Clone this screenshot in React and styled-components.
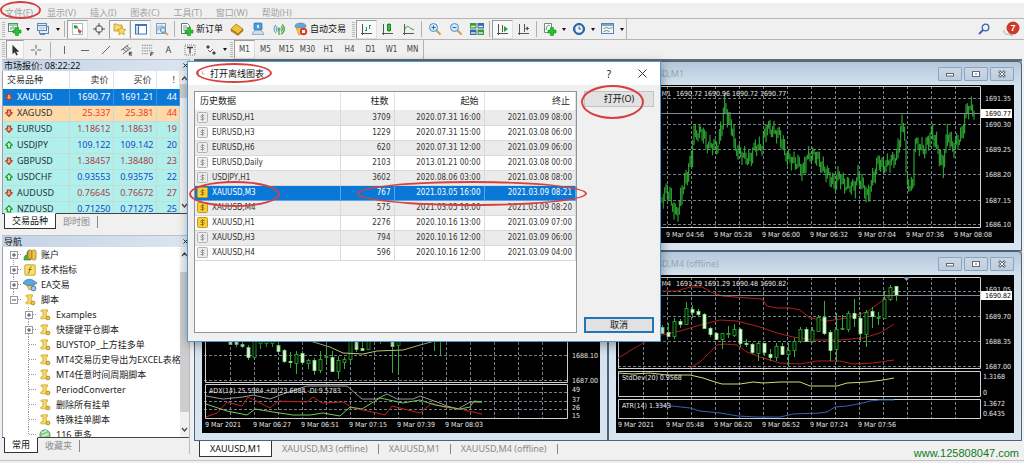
import React from "react";
import styled, { createGlobalStyle, css } from "styled-components";

const UI = `"Noto Sans", "Noto Sans CJK SC", sans-serif`;
const SMALL = `"DejaVu Sans Condensed", "Noto Sans", "Noto Sans CJK SC", sans-serif`;

const GlobalStyle = createGlobalStyle`
  * { box-sizing: border-box; }
  body { margin: 0; background: #f0f0f0; font: 9px/12px ${UI}; color: #222; overflow-x: hidden; }
  button { font: inherit; color: inherit; border: 0; padding: 0; margin: 0; background: none; cursor: default; }
  table { border-collapse: collapse; border-spacing: 0; }
  svg { display: block; flex: none; }
`;

const Page = styled.div`
  position: relative;
  display: flex;
  flex-direction: column;
  min-height: 100vh;
`;
const MenuBar = styled.nav`
  display: flex;
  gap: 14px;
  height: 18px;
  padding: 3px 5px 0;
  border-top: 3px solid #fff;
  color: #a2a2a2;
  line-height: 9px;
`;
const MenuItem = styled.button`
  white-space: nowrap;
  position: relative;
`;
const Bar = styled.div`
  display: flex;
  height: ${(p) => p.$h}px;
  border-top: 1px solid #b4b4b4;
`;
const Tools = styled.div`
  display: flex;
  align-items: center;
  padding-left: 1px;
  border-right: 1px solid #b4b4b4;
`;
const Spring = styled.div`
  flex: 1;
`;
const Tool = styled.button`
  display: flex;
  align-items: center;
  justify-content: center;
  gap: 2px;
  width: ${(p) => p.$w || 21}px;
  height: 19px;
  white-space: nowrap;
  color: ${(p) => (p.$text ? "#111" : "#444")};
  font-family: ${(p) => (p.$period ? SMALL : UI)};
  font-size: ${(p) => (p.$period ? 8 : 9)}px;
  ${(p) =>
    p.$on &&
    css`
      background: #f8f8f8;
      border: 1px solid #dedede;
      border-top-color: #9c9c9c;
      border-left-color: #9c9c9c;
    `}
`;
const Drop = styled.button`
  width: 8px;
  height: 18px;
  display: flex;
  align-items: center;
  justify-content: center;
  &::after {
    content: "";
    border: 2px solid transparent;
    border-top: 3px solid #111;
    border-bottom: 0;
  }
`;
const Sep = styled.span`
  width: 1px;
  height: 16px;
  margin: 0 2px;
  background: #b0b0b0;
`;
const Grip = styled.span`
  width: 3px;
  height: 15px;
  margin: 0 1px;
  background: repeating-linear-gradient(#b9b9b9 0 1px, #f0f0f0 1px 2px);
`;
const Alerts = styled.div`
  display: flex;
  align-items: center;
  gap: 12px;
  padding-right: 4px;
`;

const Workspace = styled.main`
  display: flex;
`;
const Side = styled.aside`
  width: 190px;
  margin-right: 4px;
  padding-left: 2px;
  flex: none;
`;
const Desk = styled.div`
  flex: 1;
  min-width: 0;
`;
const Panel = styled.section`
  margin-bottom: 5px;
  border-right: 1px solid #b5bcc4;
`;
const PanelTitle = styled.header`
  display: flex;
  justify-content: space-between;
  height: 12px;
  padding: 0 1px 0 2px;
  line-height: 11px;
  color: #111;
  background: linear-gradient(90deg, #c3d3e6, #dce5ef);
  border-top: 1px solid #b9c2cc;
`;
const PanelHeading = styled.h2`
  margin: 0;
  font: inherit;
`;
const PanelBody = styled.div`
  display: flex;
  height: ${(p) => p.$h}px;
  overflow: hidden;
  background: #fff;
  border-left: 1px solid #9aa2aa;
`;
const ScrollBar = styled.div`
  width: 9px;
  flex: none;
  display: flex;
  flex-direction: column;
  align-items: center;
  justify-content: space-between;
  background: #f0f0f0;
  padding: 4px 0;
`;
const Thumb = styled.span`
  width: 9px;
  height: ${(p) => p.$h}px;
  margin-bottom: auto;
  margin-top: ${(p) => p.$top}px;
  background: #cdcdcd;
`;
const PanelTabs = styled.div`
  display: flex;
  height: 17px;
  padding-left: 2px;
  border-top: 1px solid #444;
`;
const PanelTab = styled.button`
  height: 16px;
  padding: 0 7px;
  margin-top: -1px;
  color: ${(p) => (p.$on ? "#111" : "#8a8a8a")};
  line-height: 14px;
  ${(p) =>
    p.$on
      ? css`
          background: #fff;
          border: 1px solid #333;
          border-top-color: #fff;
        `
      : css`
          margin-top: 2px;
          height: 12px;
          line-height: 10px;
          border-right: 1px solid #8a8a8a;
        `}
`;

const QuoteTable = styled.table`
  flex: 1;
  width: 176px;
  table-layout: fixed;
  th {
    height: 18px;
    padding: 0 4px;
    font-weight: 400;
    text-align: right;
    border-right: 1px solid #e2e2e2;
    color: #333;
  }
  th:first-child {
    text-align: left;
  }
`;
const rowColors = { sel: "#0a78d7", hot: "#ffd9a8", up: "#b0f0ec", down: "#b0f0ec" };
const textColors = { sel: "#fff", hot: "#e8402c", up: "#1747c8", down: "#b03a48" };
const QuoteRow = styled.tr`
  background: ${(p) => rowColors[p.$tone]};
  td {
    height: 16px;
    padding: 0 2px;
    text-align: right;
    line-height: 14px;
    color: ${(p) => textColors[p.$tone]};
    border: 1px solid ${(p) => (p.$tone === "sel" ? "#3b93e0" : "#c4dcd6")};
    border-width: 0 1px 1px 0;
  }
  td:first-child {
    text-align: left;
    color: ${(p) => (p.$tone === "sel" ? "#fff" : "#23333b")};
  }
`;
const Symbol = styled.span`
  display: flex;
  align-items: center;
  gap: 4px;
`;

const Tree = styled.ul`
  flex: 1;
  min-width: 0;
  margin: 0;
  padding: 0;
  overflow: hidden;
  list-style: none;
`;
const TreeRow = styled.li`
  display: flex;
  align-items: center;
  height: 15px;
  padding-left: ${(p) => (p.$level ? 22 : 7)}px;
  white-space: nowrap;
  gap: 4px;
`;
const Branch = styled.svg`
  overflow: visible;
`;
const TreeIcon = styled.span`
  display: flex;
  justify-content: center;
  width: 15px;
  flex: none;
`;
const TreeLabel = styled.button`
  white-space: nowrap;
`;

const Mdi = styled.div`
  margin-right: 2px;
  display: grid;
  grid-template-columns: 1fr 1fr;
  align-content: start;
  border-top: 2px solid #626a73;
  background: #a0a6ac;
`;
const Frame = styled.section`
  display: flex;
  flex-direction: column;
  border: 1px solid #4f6375;
  border-radius: 4px 4px 0 0;
  padding: 0 7px 7px;
  background: linear-gradient(#b4c8dc, #d3e0ed 23px, #d7e4f1);
`;
const FrameTitle = styled.header`
  display: flex;
  align-items: center;
  gap: 2px;
  height: 23px;
  padding-left: 3px;
  color: #98a4af;
`;
const FrameLabel = styled.span`
  flex: 1;
  padding-left: 1px;
  white-space: nowrap;
`;
const FrameButton = styled.button`
  display: flex;
  align-items: center;
  justify-content: center;
  width: 24px;
  height: 14px;
  border: 1px solid #8fa3b8;
  border-radius: 1px;
  background: linear-gradient(#c9d8e8, #bccee0);
`;
const Plot = styled.svg`
  width: 100%;
  height: auto;
  background: #000;
  font-family: ${SMALL};
  font-size: 7px;
  fill: #e6e6e6;
`;

const Footer = styled.footer`
  display: flex;
  height: 16px;
  padding-left: 5px;
  align-items: flex-start;
`;
const ChartTab = styled.button`
  height: 16px;
  padding: 0 10px;
  line-height: 15px;
  white-space: nowrap;
  ${(p) =>
    p.$on
      ? css`
          background: #fff;
          color: #111;
          border: 1px solid #333;
          border-top: 0;
        `
      : css`
          color: #8a8a8a;
          height: 10px;
          margin-top: 3px;
          line-height: 10px;
          border-right: 1px solid #8a8a8a;
        `}
`;
const StatusLine = styled.div`
  flex: 1;
  margin-top: 1px;
  border-top: 1px solid #c4c4c4;
`;
const SiteLink = styled.a`
  position: absolute;
  right: 5px;
  bottom: 3px;
  z-index: 3;
  font: 11px/13px "Liberation Sans", Arial, sans-serif;
  color: #0f7a1c;
  text-decoration: none;
`;

const Dialog = styled.div`
  position: absolute;
  left: 187px;
  top: 61px;
  width: 474px;
  z-index: 2;
  border: 1px solid #4a9ad4;
  background: #f0f0f0;
  box-shadow: 1px 3px 10px rgba(0, 0, 0, 0.35);
`;
const DialogTitle = styled.header`
  display: flex;
  align-items: center;
  height: 23px;
  padding: 0 12px 0 9px;
  background: #fff;
  color: #111;
`;
const DialogHeading = styled.h1`
  flex: 1;
  margin: 0 0 0 4px;
  font: inherit;
`;
const DialogIconButton = styled.button`
  width: 10px;
  margin-left: 24px;
  font-size: 10px;
`;
const DialogBody = styled.div`
  display: flex;
  gap: 7px;
  padding: 6px 6px 8px;
`;
const ListBox = styled.div`
  flex: 1;
  height: 242px;
  background: #fff;
  border: 1px solid #8c939a;
`;
const HistoryTable = styled.table`
  width: 100%;
  table-layout: fixed;
  font-family: ${SMALL};
  font-size: 8px;
  th {
    height: 18px;
    padding: 0 5px;
    font: 9px/12px ${UI};
    color: #222;
    text-align: right;
    border-right: 1px solid #e3e3e3;
  }
  th:first-child {
    text-align: left;
  }
`;
const HistoryRow = styled.tr`
  background: ${(p) => (p.$on ? "#0a78d7" : p.$alt ? "#ebebeb" : "#fff")};
  color: ${(p) => (p.$on ? "#fff" : "#333")};
  td {
    height: 15px;
    padding: 0 3px 0 2px;
    line-height: 13px;
    text-align: right;
    border: 1px solid ${(p) => (p.$on ? "#5aa6e6" : "#d9d9d9")};
    border-width: 0 1px 1px 0;
    white-space: nowrap;
  }
  td:first-child {
    text-align: left;
  }
`;
const DialogActions = styled.div`
  display: flex;
  flex-direction: column;
  justify-content: space-between;
  width: 70px;
`;
const ActionButton = styled.button`
  height: 16px;
  line-height: 12px;
  color: #111;
  background: #e1e1e1;
  border: ${(p) => (p.$focus ? "2px solid #1f77b8" : "1px solid #c4c4c4")};
`;
const Ring = styled.span`
  position: absolute;
  left: ${(p) => p.$x}px;
  top: ${(p) => p.$y}px;
  width: ${(p) => p.$w}px;
  height: ${(p) => p.$h}px;
  border: 2px solid #d8403f;
  border-radius: 50%;
  pointer-events: none;
`;

/* ---------- icons ---------- */

const Ico = ({ s = 14, children, vb = 14 }) => (
  <svg width={s} height={s} viewBox={`0 0 ${vb} ${vb}`} fill="none" aria-hidden="true">
    {children}
  </svg>
);
const plus = <path d="M7.500 5.500h3v2.500h2.500v3h-2.500v2.500h-3v-2.500h-2.500v-3h2.500z" fill="#27c32f" stroke="#0c8a17" strokeWidth=".6" />;

const icons = {
  newChart: (
    <Ico>
      <rect x=".5" y="1.500" width="9" height="8" fill="#fff" stroke="#5d8a76" />
      <path d="M1 3h8M3 8V5M5 7V4M7 8V5" stroke="#3c9a55" />
      {plus}
    </Ico>
  ),
  profiles: (
    <Ico>
      <rect x="3.500" y="4.500" width="9" height="7" fill="#e4effa" stroke="#5e89b5" />
      <rect x="1.500" y="1.500" width="9" height="7" fill="#dcebf8" stroke="#5e89b5" />
      <path d="M2 3.500h8M4 12.500h5" stroke="#5e89b5" />
      <path d="M3.500 6h5" stroke="#9ec0e0" />
    </Ico>
  ),
  market: (
    <Ico>
      <rect x="1.500" y="1.500" width="10" height="11" fill="#fff" stroke="#a5c2b3" />
      <path d="M3 3l4 1-2 3-2-1z" fill="#27a038" />
      <path d="M7 7l4 2-2 3-2-2z" fill="#d4502e" />
      <path d="M6 5l2 3" stroke="#777" />
    </Ico>
  ),
  target: (
    <Ico>
      <circle cx="7" cy="7" r="3.500" stroke="#555" />
      <path d="M7 1v4M7 9v4M1 7h4M9 7h4" stroke="#555" />
    </Ico>
  ),
  navigator: (
    <Ico>
      <path d="M1 2h3l1 1h4v6H1z" fill="#f3d978" stroke="#c49318" strokeWidth=".8" />
      <path d="M8.500 4.500l1.300 2.800 3 .4-2.200 2 .6 3-2.700-1.500-2.700 1.500.6-3-2.200-2 3-.4z" fill="#ffdf55" stroke="#c49318" strokeWidth=".8" />
    </Ico>
  ),
  terminal: (
    <Ico>
      <rect x="1.500" y="2.500" width="11" height="9.500" fill="#fff" stroke="#3f74b5" />
      <path d="M1.500 3h11" stroke="#3f74b5" strokeWidth="2" />
      <path d="M4.500 4v8" stroke="#3f74b5" />
      <path d="M2 6h2M2 8h2M2 10h2" stroke="#8db3de" />
    </Ico>
  ),
  tester: (
    <Ico>
      <rect x="1.500" y="1.500" width="9" height="10" fill="#e5f0fa" stroke="#7fa3c7" />
      <path d="M3 9V4M5 8V3M7 7V3M9 8V4" stroke="#6b8fb5" strokeWidth=".8" />
      <circle cx="8" cy="8" r="2.500" fill="#cfe6f7" stroke="#5d86b0" />
      <path d="M10 10l3 3" stroke="#c29a3d" strokeWidth="1.500" />
    </Ico>
  ),
  order: (
    <Ico>
      <path d="M1.500 1.500h6l2 2v8h-8z" fill="#fff" stroke="#5d7a70" />
      <path d="M3 4h4M3 6h4M3 8h2" stroke="#7c9a8c" />
      {plus}
    </Ico>
  ),
  book: (
    <Ico>
      <path d="M1 7l5-5 7 5-5 5z" fill="#f0c23c" stroke="#a8790f" strokeWidth=".8" />
      <path d="M1 7v2l7 4.500 5-4.500V7l-5 5z" fill="#c48c1b" stroke="#97690d" strokeWidth=".6" />
    </Ico>
  ),
  expert: (
    <Ico>
      <rect x="3" y="1" width="8" height="7" rx="1" fill="#4a9be0" stroke="#2a6aab" strokeWidth=".7" />
      <path d="M6 3v3h2v-3z" fill="#d8ecfb" />
      <path d="M2 10.500c0-3 10-3 10 0l1 2H1z" fill="#cfdde9" stroke="#7d97ad" strokeWidth=".7" />
    </Ico>
  ),
  signal: (
    <Ico>
      <path d="M4 3a5 5 0 0 0 0 8M5.500 4.500a3 3 0 0 0 0 5" stroke="#6a9cc0" strokeWidth="1.100" />
      <path d="M10 2.500a5.500 5.500 0 0 1-1 9.500M9 4.500a3 3 0 0 1 0 5" stroke="#45ad4b" strokeWidth="1.400" />
      <circle cx="7" cy="7" r="1.600" fill="#5cae4e" />
      <path d="M7 8v5" stroke="#45953f" strokeWidth="1.200" />
    </Ico>
  ),
  auto: (
    <Ico>
      <ellipse cx="6.500" cy="4" rx="5.500" ry="3" fill="#63a7d8" stroke="#3678ad" strokeWidth=".6" />
      <path d="M2 6h8l-1 5-4 2z" fill="#f1cd4b" stroke="#b78d1c" strokeWidth=".6" />
      <circle cx="9.500" cy="9.500" r="3.700" fill="#dc3a2b" />
      <rect x="8" y="8" width="3" height="3" fill="#fff" />
    </Ico>
  ),
  bars: (
    <Ico>
      <path d="M2.500 2v11M1 11.500h11" stroke="#555" />
      <path d="M6.500 9V5M9.500 7V3M5 8.500h1.500M9.500 3.500h1.500" stroke="#2c9c3a" />
    </Ico>
  ),
  candle: (
    <Ico>
      <path d="M2.500 2v11M1 11.500h11" stroke="#555" />
      <path d="M8 1v9" stroke="#1b8a2a" />
      <rect x="6.500" y="2.500" width="3" height="6" fill="#35c244" stroke="#1b8a2a" />
    </Ico>
  ),
  line: (
    <Ico>
      <path d="M2.500 2v11M1 11.500h11" stroke="#555" />
      <path d="M2.500 8C5 2 7 5 8 6l4 2" stroke="#2c9c3a" />
    </Ico>
  ),
  zoomIn: (
    <Ico>
      <path d="M8.500 8.500l4 4" stroke="#c9a23b" strokeWidth="2" />
      <circle cx="5.500" cy="5.500" r="4" fill="#d3ebfb" stroke="#4c8cc4" />
      <path d="M5.500 3.500v4M3.500 5.500h4" stroke="#2d6cab" />
    </Ico>
  ),
  zoomOut: (
    <Ico>
      <path d="M8.500 8.500l4 4" stroke="#c9a23b" strokeWidth="2" />
      <circle cx="5.500" cy="5.500" r="4" fill="#d3ebfb" stroke="#4c8cc4" />
      <path d="M3.500 5.500h4" stroke="#2d6cab" />
    </Ico>
  ),
  tile: (
    <Ico>
      <path d="M0 1h6.500v5.500H0zM7.500 7.500H14V13H7.500z" fill="#3b9a3f" />
      <path d="M7.500 1H14v5.500H7.500zM0 7.500h6.500V13H0z" fill="#3769ad" />
      <path d="M1 4.500h4.500M8.500 4.500H13M1 11h4.500M8.500 11H13" stroke="#d9f0e0" strokeWidth="1.600" />
    </Ico>
  ),
  scroll: (
    <Ico>
      <path d="M2.500 2v11M1 11.500h11" stroke="#555" />
      <path d="M6.500 3v7" stroke="#555" />
      <path d="M8 4l4 3-4 3z" fill="#2aa239" />
    </Ico>
  ),
  shift: (
    <Ico>
      <path d="M2.500 2v11M1 11.500h11" stroke="#555" />
      <path d="M7.500 2v8M12 6.500H9" stroke="#555" />
      <path d="M11 4.500v4L8 6.500z" fill="#555" />
    </Ico>
  ),
  indicator: (
    <Ico>
      <path d="M1.500 1.500h7v9h-7z" fill="#fff" stroke="#6d8a7c" />
      <path d="M3 8c1-5 2-5 4-4" stroke="#4a8a5c" />
      {plus}
    </Ico>
  ),
  clock: (
    <Ico>
      <circle cx="7" cy="7" r="5.500" fill="#2f6fb4" stroke="#23598f" />
      <circle cx="7" cy="7" r="3.700" fill="#eef6fc" />
      <path d="M7 4.500V7h2" stroke="#23598f" />
    </Ico>
  ),
  template: (
    <Ico>
      <rect x=".5" y="1.500" width="12" height="10" fill="#eff5fb" stroke="#5c86ad" />
      <path d="M1 3h11" stroke="#5c86ad" strokeWidth="1.500" />
      <path d="M2.500 6.500l3-1 3 1 3-1M2.500 9.500l3-1 3 1" stroke="#4f9268" strokeWidth=".9" />
    </Ico>
  ),
  cursor: (
    <Ico s={12}>
      <path d="M4 1v11l2.700-2.500L8.500 13.500l1.800-.9-1.900-3.600H12z" fill="#333" />
    </Ico>
  ),
  cross: (
    <Ico s={12}>
      <path d="M7 1v4.500M7 8.500V13M1 7h4.500M8.500 7H13" stroke="#666" strokeWidth="1.200" />
    </Ico>
  ),
  vline: (
    <Ico s={12} vb={12}>
      <path d="M6.500 2v8" stroke="#666" />
    </Ico>
  ),
  hline: (
    <Ico s={12} vb={12}>
      <path d="M2 6.500h8" stroke="#666" />
    </Ico>
  ),
  trend: (
    <Ico s={12} vb={12}>
      <path d="M2 10l8-8" stroke="#666" />
    </Ico>
  ),
  channel: (
    <Ico s={13}>
      <path d="M1 8l8-6M3 12l9-7M3 6.500l4 3M5 4.500l4 3M7 3l3 3" stroke="#555" strokeWidth=".9" />
      <path d="M13 10h-3v3h3M10 11.500h2.500" stroke="#333" />
    </Ico>
  ),
  fib: (
    <Ico s={13}>
      <path d="M1 2.500h11M1 5.500h11M1 8.500h11M1 11.500h7" stroke="#777" strokeDasharray="1.500 1" />
      <path d="M10.500 14v-3.500h3M10.500 12h2" stroke="#333" />
    </Ico>
  ),
  label: (
    <Ico s={12} vb={12}>
      <rect x="1" y="1" width="10" height="10" stroke="#777" strokeDasharray="1 1" />
      <path d="M3 3.500h6M6 3.500v6" stroke="#444" strokeWidth="1.300" />
    </Ico>
  ),
  shapes: (
    <Ico s={12} vb={12}>
      <path d="M3 1l2 2-2 2-2-2zM9 7l2 2-2 2-2-2z" fill="#444" />
      <path d="M3 6l2 2 3-3" stroke="#555" strokeWidth=".9" />
    </Ico>
  ),
};

const ArrowMark = ({ up }) => (
  <Ico s={8} vb={10}>
    {up ? (
      <path d="M5 .8L9 5 7 5.500v3H3v-3L1 5z" fill="#d7f3cf" stroke="#1f9a34" strokeWidth="1.600" />
    ) : (
      <path d="M5 9.200L9 5 7 4.500v-3H3v3L1 5z" fill="#f3a780" stroke="#b2402a" strokeWidth="1.600" />
    )}
  </Ico>
);
const Chevron = ({ down }) => (
  <Ico s={7} vb={7}>
    <path d={down ? "M1 2l2.500 3L6 2" : "M1 5l2.500-3L6 5"} stroke="#444" strokeWidth="1.200" />
  </Ico>
);
const TreeNode = ({ box, first, last }) => (
  <Branch width="8" height="15" viewBox="0 0 8 15" fill="none" aria-hidden="true">
    <path d={`M3.500 ${first ? 7 : 0}V${last ? 8 : 15}M4 7.500h8`} stroke="#9a9a9a" strokeDasharray="1 1" />
    {box && <rect x=".5" y="4.500" width="7" height="7" fill="#fff" stroke="#9a9a9a" />}
    {box && <path d={box === "minus" ? "M2 8h4" : "M2 8h4M4 6v4"} stroke="#3a4a6a" />}
  </Branch>
);
const Scroll = () => (
  <Ico s={12}>
    <path d="M2 2.500c0-1 1-1.500 2-1.500h6v2H8.500v6H11c1.500 0 1.500 2.500 0 2.500H3c-1.500 0-1.500-2.500 0-2.500h1.500v-6H3z" fill="#f8da62" stroke="#c79c22" strokeWidth=".8" />
    <circle cx="10.500" cy="10.500" r="2.200" fill="#f3c944" stroke="#a88720" />
  </Ico>
);
const Accounts = () => (
  <Ico s={14}>
    <path d="M1 12c0-4 1-5 3-5V4l2-2 2 1v9z" fill="#4cae3c" stroke="#2d7f26" strokeWidth=".6" />
    <rect x="5" y="2" width="4" height="9" rx="1.500" fill="#e8b53a" stroke="#9e7418" strokeWidth=".7" />
    <rect x="9" y="2" width="4" height="10" rx="1.500" fill="#efc650" stroke="#9e7418" strokeWidth=".7" />
  </Ico>
);
const Functions = () => (
  <Ico s={12}>
    <rect x="1" y="1" width="12" height="12" rx="1" fill="#fbe069" stroke="#b8962a" />
    <path d="M9 3.500c-2-.5-2 1-2.500 4s-1 3.500-2 3M5 6.500h4" stroke="#7a5a10" />
  </Ico>
);
const Hat = () => (
  <Ico s={14}>
    <path d="M3 6l8 0-1 5-4 1z" fill="#f0cd55" stroke="#b48f27" strokeWidth=".6" />
    <path d="M0 5c2-4 8-5 11-2l3 2c-3 3-10 4-14 0z" fill="#5da7d6" stroke="#2f76a8" strokeWidth=".7" />
    <circle cx="10.500" cy="10.500" r="2.400" fill="#9fc9e4" stroke="#3f7fab" />
  </Ico>
);
const Globe = () => (
  <Ico s={12}>
    <circle cx="7" cy="7" r="6" fill="#8ecf80" stroke="#4b9a56" />
    <path d="M3 4c3 0 4-2 6-2M4 9c2-3 5-1 7-4" stroke="#d9f0ff" strokeWidth="1.500" />
  </Ico>
);
const Coin = ({ gold }) => (
  <svg width="11" height="11" viewBox="0 0 11 11" aria-hidden="true">
    <rect x=".5" y=".5" width="10" height="10" rx="1" fill={gold ? "#f6cf3e" : "#ededed"} stroke={gold ? "#c39a1c" : "#b3b3b3"} />
    <path d="M7.500 3.500h-3q-1.500 1 0 2h2q1.500 1 0 2h-3M5.500 2v7" fill="none" stroke={gold ? "#8a6509" : "#8c8c8c"} strokeWidth=".8" />
  </svg>
);

/* ---------- data ---------- */

const menus = ["文件(F)", "显示(V)", "插入(I)", "图表(C)", "工具(T)", "窗口(W)", "帮助(H)"];
const periods = ["M1", "M5", "M15", "M30", "H1", "H4", "D1", "W1", "MN"];

const quotes = [
  ["XAUUSD", "1690.77", "1691.21", 44, "sel", false],
  ["XAGUSD", "25.337", "25.381", 44, "hot", false],
  ["EURUSD", "1.18612", "1.18631", 19, "down", false],
  ["USDJPY", "109.122", "109.142", 20, "up", true],
  ["GBPUSD", "1.38457", "1.38480", 23, "down", false],
  ["USDCHF", "0.93553", "0.93575", 22, "up", true],
  ["AUDUSD", "0.76645", "0.76672", 27, "down", false],
  ["NZDUSD", "0.71250", "0.71275", 25, "up", true],
];

const tree = [
  [0, "plus", Accounts, "账户"],
  [0, "plus", Functions, "技术指标"],
  [0, "plus", Hat, "EA交易"],
  [0, "minus", Scroll, "脚本"],
  [1, "plus", Scroll, "Examples"],
  [1, "plus", Scroll, "快捷键平仓脚本"],
  [1, "", Scroll, "BUYSTOP_上方挂多单"],
  [1, "", Scroll, "MT4交易历史导出为EXCEL表格"],
  [1, "", Scroll, "MT4任意时间周期脚本"],
  [1, "", Scroll, "PeriodConverter"],
  [1, "", Scroll, "删除所有挂单"],
  [1, "", Scroll, "特殊挂单脚本"],
  [1, "", Globe, "116 更多"],
];

const history = [
  ["EURUSD,H1", 3709, "2020.07.31 16:00", "2021.03.09 08:00"],
  ["EURUSD,H3", 1229, "2020.07.31 15:00", "2021.03.08 06:00"],
  ["EURUSD,H6", 620, "2020.07.31 12:00", "2021.03.09 06:00"],
  ["EURUSD,Daily", 2103, "2013.01.21 00:00", "2021.03.08 00:00"],
  ["USDJPY,H1", 3602, "2020.08.06 03:00", "2021.03.08 08:00"],
  ["XAUUSD,M3", 767, "2021.03.05 16:00", "2021.03.09 08:21"],
  ["XAUUSD,M4", 575, "2021.03.05 16:00", "2021.03.09 08:20"],
  ["XAUUSD,H1", 2276, "2020.10.16 13:00", "2021.03.09 07:00"],
  ["XAUUSD,H3", 794, "2020.10.16 12:00", "2021.03.09 06:00"],
  ["XAUUSD,H4", 596, "2020.10.16 12:00", "2021.03.09 04:00"],
];

/* mid price of the one-minute series, in plot units */
const m1Mid = [
  [46, 115], [51, 105], [55, 113], [59, 128], [63, 125], [67, 103], [71, 92], [76, 72], [78, 50], [87, 47], [91, 60],
  [102, 61], [106, 42], [109, 20], [112, 32], [117, 45], [119, 62], [124, 68], [134, 75], [139, 62], [146, 62], [151, 42],
  [164, 50], [171, 72], [184, 80], [187, 88], [191, 72], [200, 70], [206, 81], [214, 92], [219, 100], [223, 90], [229, 100],
  [239, 102], [242, 92], [247, 100], [252, 112], [256, 98], [263, 75], [267, 82], [281, 72], [286, 42], [289, 45], [291, 98],
  [297, 102], [299, 58], [309, 65], [316, 47], [320, 57], [327, 82], [332, 48], [337, 63], [346, 50], [351, 25], [355, 22], [359, 28],
];

const m4Candles = [
  [50, 58, 52, 58, 1], [48, 61, 57, 61, 1], [43, 64, 46, 61, 0], [44, 53, 46, 49, 1], [27, 50, 33, 49, 0], [30, 43, 34, 37, 1],
  [34, 42, 36, 39, 1], [38, 53, 39, 53, 1], [52, 62, 53, 59, 1], [57, 64, 58, 64, 1], [58, 74, 58, 64, 0], [51, 63, 58, 59, 0],
  [49, 62, 54, 60, 0], [53, 72, 54, 68, 1], [64, 72, 68, 69, 1], [68, 79, 69, 77, 1], [67, 86, 68, 78, 0], [68, 81, 68, 77, 1],
  [74, 86, 79, 82, 1], [68, 86, 71, 82, 0], [68, 80, 71, 79, 1], [68, 92, 75, 79, 0], [63, 82, 66, 75, 0], [52, 68, 54, 66, 0],
  [52, 67, 54, 66, 1], [52, 68, 55, 66, 0], [40, 57, 42, 56, 0], [26, 60, 42, 58, 1], [55, 86, 57, 75, 1], [38, 87, 54, 74, 0],
  [40, 55, 53, 54, 0], [36, 57, 38, 54, 0], [24, 52, 38, 43, 1], [37, 66, 43, 58, 1], [35, 72, 37, 59, 0], [32, 53, 36, 41, 1],
  [37, 50, 42, 43, 0], [16, 44, 24, 43, 0], [10, 26, 12, 24, 0], [11, 26, 11, 20, 1],
];

const m3Candles = [
  [60, 70, 62, 69, 1], [62, 72, 66, 69, 1], [66, 73, 69, 71, 1], [70, 85, 72, 82, 1], [50, 84, 60, 82, 0], [60, 74, 66, 68, 0],
  [60, 72, 66, 68, 0], [60, 72, 64, 68, 0], [68, 77, 70, 76, 1], [74, 88, 75, 86, 1], [77, 93, 86, 87, 1], [76, 99, 79, 88, 0],
  [76, 90, 78, 87, 1], [84, 94, 85, 88, 0], [83, 100, 85, 95, 1], [76, 98, 84, 95, 0], [71, 88, 81, 82, 0], [76, 97, 82, 96, 1],
  [81, 104, 85, 96, 0], [82, 94, 84, 87, 0], [60, 88, 62, 84, 0], [56, 77, 60, 74, 1], [66, 76, 73, 75, 1], [56, 75, 62, 74, 0],
  [50, 64, 52, 60, 0], [50, 69, 52, 60, 0], [50, 64, 52, 60, 1], [50, 98, 52, 71, 1], [50, 98, 55, 70, 0], [48, 60, 50, 55, 0],
  [44, 58, 46, 54, 0], [42, 60, 44, 52, 1], [40, 56, 42, 50, 0], [42, 60, 44, 56, 1], [50, 76, 52, 60, 1], [50, 80, 54, 62, 0],
];

/* ---------- charts ---------- */

const Grid = ({ xs, ys, right, top, bottom }) => (
  <path
    d={xs.map((x) => `M${x + 0.5} ${top}V${bottom}`).join("") + ys.map((y) => `M2 ${y + 0.5}H${right}`).join("")}
    stroke="#76818c"
    strokeDasharray="3 2"
    fill="none"
  />
);
const columns = (start) => Array.from({ length: 14 }, (_, i) => start + i * 24);
const Candles = ({ list, start }) => (
  <g>
    {list.map(([hi, lo, top, bot, full], i) => {
      const x = start + i * 6;
      return (
        <g key={i}>
          <path d={`M${x + 0.5} ${hi}V${lo}`} stroke="#2fae38" />
          <rect x={x - 1} y={top + 0.5} width="3" height={Math.max(bot - top, 1)} fill={full ? "#e6ffe2" : "#021002"} stroke={full ? "#8be088" : "#2fae38"} strokeWidth=".8" />
        </g>
      );
    })}
  </g>
);
const Prices = ({ items, x }) =>
  items.map(([t, y]) => (
    <text key={t + y} x={x} y={y + 3}>
      {t}
    </text>
  ));
const Times = ({ items, start }) =>
  items.map((t, i) => (
    <text key={t} x={start + i * 48} y="152">
      {t}
    </text>
  ));
const Last = ({ y, value }) => (
  <g>
    <path d={`M2 ${y + 0.5}H364`} stroke="#7f8b97" />
    <rect x="365" y={y - 4} width="31" height="9" fill="#fff" />
    <text x="369" y={y + 3} fill="#000">
      {value}
    </text>
  </g>
);
const Trace = ({ pts, color }) => <polyline points={pts} fill="none" stroke={color} />;

function m1Bars() {
  let d = "";
  let seg = 0;
  for (let i = 0; i < 235; i++) {
    const x = 46 + (i * 4) / 3;
    if (x > 359) break;
    while (seg < m1Mid.length - 2 && x > m1Mid[seg + 1][0]) seg++;
    const [x0, y0] = m1Mid[seg];
    const [x1, y1] = m1Mid[seg + 1];
    const slope = (y1 - y0) / (x1 - x0);
    const mid = y0 + slope * (x - x0);
    const wave = Math.sin(i * 1.7) * 4;
    const reach = 1.5 + Math.abs(Math.sin(i * 5.1)) * 5 + Math.min(Math.abs(slope) * 0.7, 14);
    const low = Math.min(mid + wave + reach, 137);
    d += `M${x.toFixed(1)} ${(mid + wave - reach).toFixed(1)}V${low.toFixed(1)}`;
  }
  return d;
}

const ChartM1 = () => (
  <Plot viewBox="0 0 398 158">
    <Grid xs={columns(27)} ys={[13, 39, 64, 89, 115, 139]} right={364} top={1} bottom={142} />
    <path d="M2 1.500H364.500V142.500H2" fill="none" stroke="#d0d0d0" />
    <path d={m1Bars()} stroke="#34bd3c" fill="none" />
    <text x="55" y="11" textAnchor="end">XAUUSD,M1</text>
    <text x="60" y="11">1690.72 1690.96 1690.72 1690.77</text>
    <Prices x={369} items={[["1691.35", 13], ["1690.30", 39], ["1689.25", 64], ["1688.20", 89], ["1687.15", 115], ["1686.10", 139]]} />
    <Last y={28} value="1690.77" />
    <Times start={50} items={["9 Mar 04:56", "9 Mar 05:28", "9 Mar 06:00", "9 Mar 06:32", "9 Mar 07:04", "9 Mar 07:36", "9 Mar 08:08"]} />
  </Plot>
);

const ChartM4 = () => (
  <Plot viewBox="0 0 398 158">
    <Grid xs={columns(27)} ys={[16, 41, 66, 91]} right={364} top={2} bottom={143} />
    <path d="M2.500 2.500H364.500V93.500H2.500zM2.500 96.500H364.500V121.500H2.500zM2.500 124.500H364.500V143.500H2.500z" fill="none" stroke="#d0d0d0" />
    <path d="M287 2h7l-3.500 4z" fill="#8d99a6" />
    <Trace color="#b01e1e" pts="46,16 61,16 74,12 86,12 97,18 107,21 131,23 146,24 151,31 161,33 174,33 184,35 194,43 211,46 231,43 251,37 267,25 278,17" />
    <Trace color="#b01e1e" pts="2,83 27,68 46,60 64,56 84,50 104,45 121,46 144,52 161,58 177,62 197,65 224,65 247,63 264,58 278,49" />
    <Trace color="#b01e1e" pts="74,93 84,87 101,70 109,69 121,70 131,77 144,82 164,88 184,89 201,86 224,86 237,89 257,88 278,85" />
    <Candles list={m4Candles} start={46} />
    <Trace color="#d6d67a" pts="2,98 17,99 34,98 51,100 74,100 87,103 99,107 106,109 124,109 137,107 147,108 164,107 184,107 194,111 221,111 231,108 251,107 267,105 278,103" />
    <Trace color="#3564b4" pts="40,130 56,131 74,133 84,136 104,138 122,141 141,142 164,142 177,139 204,138 211,137 219,132 231,131 247,128 254,126 264,125 278,125" />
    <text x="55" y="11" textAnchor="end">XAUUSD,M4</text>
    <text x="60" y="11">1691.29 1691.29 1690.48 1690.82</text>
    <text x="6" y="105">StdDev(20) 0.9568</text>
    <text x="6" y="133">ATR(14) 1.3343</text>
    <Prices x={369} items={[["1691.05", 14], ["1689.70", 41], ["1688.35", 66], ["1687.00", 91]]} />
    <Prices x={367} items={[["1.3168", 101], ["0", 117], ["1.3672", 128], ["0.6435", 138]]} />
    <Last y={20} value="1690.82" />
    <Times start={2} items={["9 Mar 2021", "9 Mar 05:48", "9 Mar 06:20", "9 Mar 06:52", "9 Mar 07:24", "9 Mar 07:56"]} />
  </Plot>
);

const ChartM3 = () => (
  <Plot viewBox="0 0 398 158">
    <Grid xs={columns(28)} ys={[80, 105, 117, 126, 134]} right={365} top={2} bottom={143} />
    <path d="M3.500 2.500H365.500V107.500H3.500zM3.500 109.500H365.500V143.500H3.500z" fill="none" stroke="#d0d0d0" />
    <Candles list={m3Candles} start={28} />
    <Trace color="#c8c87a" pts="95,60 108,66 128,72 141,78 161,79 175,76 201,75 218,70 233,66 250,60" />
    <Trace color="#9a9a9a" pts="4,121 21,124 41,122 51,120 68,124 81,119 105,111 145,111 160,124 175,124 185,119 195,124 211,124 218,121 235,127 245,131 256,134 268,127 280,127" />
    <Trace color="#c02020" pts="4,142 15,138 25,127 40,131 46,122 68,133 76,126 105,127 111,122 120,128 141,127 151,133 175,138 183,140 190,131 218,138 230,128 241,132 258,134 280,139" />
    <Trace color="#76c85a" pts="4,129 25,136 45,140 53,134 71,137 91,140 108,140 121,138 138,141 148,132 160,134 178,123 201,128 218,125 233,130 258,134 268,132 272,126 280,127" />
    <text x="7" y="118">ADX(14) 25.5984 +DI:23.6884 -DI:9.5783</text>
    <Prices x={370} items={[["1688.10", 80], ["1687.00", 105], ["49", 114], ["37", 124], ["26", 132], ["15", 140]]} />
    <Times start={3} items={["9 Mar 2021", "9 Mar 06:27", "9 Mar 06:51", "9 Mar 07:15", "9 Mar 07:39", "9 Mar 08:03"]} />
  </Plot>
);

const ChartWindow = ({ title, children }) => (
  <Frame>
    <FrameTitle>
      <Coin />
      <FrameLabel>{title}</FrameLabel>
      <FrameButton aria-label="最小化">
        <Ico s={8} vb={8}><rect x=".5" y="3.500" width="7" height="2.500" fill="#fff" stroke="#667" /></Ico>
      </FrameButton>
      <FrameButton aria-label="还原">
        <Ico s={8} vb={8}><rect x=".5" y="1.500" width="7" height="5" fill="#fff" stroke="#667" /><path d="M3 4h2" stroke="#667" /></Ico>
      </FrameButton>
      <FrameButton aria-label="关闭">
        <Ico s={8} vb={8}><path d="M1 1l6 6M7 1L1 7" stroke="#667" strokeWidth="2.600" /><path d="M1.500 1.500l5 5M6.500 1.500l-5 5" stroke="#fff" /></Ico>
      </FrameButton>
    </FrameTitle>
    {children}
  </Frame>
);

/* ---------- page parts ---------- */

const T = ({ i, ...rest }) => (
  <Tool aria-label={i} {...rest}>
    {icons[i]}
  </Tool>
);

const StandardBar = () => (
  <Bar $h={21}>
    <Tools>
      <Grip />
      <T i="newChart" $w={18} />
      <Drop aria-label="新图表菜单" />
      <T i="profiles" $w={22} />
      <Drop aria-label="配置菜单" />
      <Sep />
      <T i="market" $on />
      <T i="target" />
      <T i="navigator" $on />
      <T i="terminal" $on />
      <T i="tester" />
      <Sep />
      <Tool $w={49} $text>{icons.order}新订单</Tool>
      <T i="book" />
      <T i="expert" />
      <T i="signal" />
      <Tool $w={62} $text>{icons.auto}自动交易</Tool>
      <Grip />
      <T i="bars" $on />
      <T i="candle" />
      <T i="line" />
      <Sep />
      <T i="zoomIn" />
      <T i="zoomOut" />
      <T i="tile" />
      <Sep />
      <T i="scroll" $on />
      <T i="shift" />
      <Sep />
      <T i="indicator" />
      <Drop aria-label="指标菜单" />
      <T i="clock" />
      <Drop aria-label="周期菜单" />
      <T i="template" />
      <Drop aria-label="模板菜单" />
    </Tools>
    <Spring />
    <Alerts>
      <svg width="12" height="12" viewBox="0 0 12 12" fill="none">
        <circle cx="7.500" cy="4.500" r="3.300" stroke="#3b62b4" strokeWidth="1.300" />
        <path d="M5 7l-4 4" stroke="#3b62b4" strokeWidth="1.800" />
      </svg>
      <svg width="18" height="17" viewBox="0 0 18 17">
        <path d="M2 9c-1 4 3 5 5 4l3 2-1-3" fill="#eee" stroke="#aaa" />
        <circle cx="11" cy="7" r="6.500" fill="#cc3a2a" />
        <text x="11" y="10" textAnchor="middle" fill="#fff" fontFamily="Liberation Sans" fontSize="9" fontWeight="700">7</text>
      </svg>
    </Alerts>
  </Bar>
);

const DrawingBar = () => (
  <Bar $h={20}>
    <Tools>
      <Grip />
      <T i="cursor" $on $w={18} />
      <T i="cross" $w={24} />
      <Sep />
      <T i="vline" />
      <T i="hline" />
      <T i="trend" />
      <T i="channel" />
      <T i="fib" />
      <Tool>A</Tool>
      <T i="label" />
      <T i="shapes" />
      <Drop aria-label="箭头菜单" />
      <Grip />
      {periods.map((p, i) => (
        <Tool key={p} $period $on={i === 0}>{p}</Tool>
      ))}
    </Tools>
  </Bar>
);

const PanelHeader = ({ children }) => (
  <PanelTitle>
    <PanelHeading>{children}</PanelHeading>
    <button aria-label="关闭面板">
      <Ico s={5} vb={5}><path d="M.5 .5l4 4M4.500 .5l-4 4" stroke="#222" /></Ico>
    </button>
  </PanelTitle>
);

const MarketWatch = () => (
  <Panel>
    <PanelHeader>市场报价: 08:22:22</PanelHeader>
    <PanelBody $h={142}>
      <QuoteTable>
        <colgroup>
          <col style={{ width: 66 }} />
          <col style={{ width: 44 }} />
          <col style={{ width: 43 }} />
          <col />
        </colgroup>
        <thead>
          <tr><th>交易品种</th><th>卖价</th><th>买价</th><th>!</th></tr>
        </thead>
        <tbody>
          {quotes.map(([s, bid, ask, spread, tone, up]) => (
            <QuoteRow key={s} $tone={tone}>
              <td><Symbol><ArrowMark up={up} />{s}</Symbol></td>
              <td>{bid}</td>
              <td>{ask}</td>
              <td>{spread}</td>
            </QuoteRow>
          ))}
        </tbody>
      </QuoteTable>
      <ScrollBar><Chevron /><Thumb $h={14} $top={2} /><Chevron down /></ScrollBar>
    </PanelBody>
    <PanelTabs>
      <PanelTab $on>交易品种</PanelTab>
      <PanelTab>即时图</PanelTab>
    </PanelTabs>
  </Panel>
);

const Navigator = () => (
  <Panel>
    <PanelHeader>导航</PanelHeader>
    <PanelBody $h={190}>
      <Tree>
        {tree.map(([level, box, Icon, name], i) => (
          <TreeRow key={name} $level={level}>
            <TreeNode box={box} first={i === 0} last={i === 3 || i === tree.length - 1} />
            <TreeIcon><Icon /></TreeIcon>
            <TreeLabel>{name}</TreeLabel>
          </TreeRow>
        ))}
      </Tree>
      <ScrollBar><Chevron /><Thumb $h={140} $top={14} /><Chevron down /></ScrollBar>
    </PanelBody>
    <PanelTabs>
      <PanelTab $on>常用</PanelTab>
      <PanelTab>收藏夹</PanelTab>
    </PanelTabs>
  </Panel>
);

const OfflineDialog = () => (
  <Dialog role="dialog" aria-labelledby="offline-title">
    <DialogTitle>
      <Ico s={9} vb={9}><path d="M1.500 1v7M5.500 2v3h2" stroke="#b9b9b9" /></Ico>
      <DialogHeading id="offline-title">打开离线图表</DialogHeading>
      <DialogIconButton aria-label="帮助">?</DialogIconButton>
      <DialogIconButton aria-label="关闭">
        <Ico s={9} vb={9}><path d="M.5 .5l8 8M8.500 .5l-8 8" stroke="#333" /></Ico>
      </DialogIconButton>
    </DialogTitle>
    <DialogBody>
      <ListBox>
        <HistoryTable>
          <colgroup>
            <col style={{ width: 145 }} />
            <col style={{ width: 54 }} />
            <col style={{ width: 90 }} />
            <col />
          </colgroup>
          <thead>
            <tr><th>历史数据</th><th>柱数</th><th>起始</th><th>终止</th></tr>
          </thead>
          <tbody>
            {history.map(([s, n, from, to], i) => (
              <HistoryRow key={s} $alt={i % 2 === 0} $on={i === 5}>
                <td><Symbol><Coin gold={i >= 5 && i <= 7} />{s}</Symbol></td>
                <td>{n}</td>
                <td>{from}</td>
                <td>{to}</td>
              </HistoryRow>
            ))}
          </tbody>
        </HistoryTable>
      </ListBox>
      <DialogActions>
        <ActionButton>打开(O)</ActionButton>
        <ActionButton $focus>取消</ActionButton>
      </DialogActions>
    </DialogBody>
    <Ring $x={8} $y={1} $w={76} $h={20} />
    <Ring $x={1} $y={119} $w={91} $h={26} />
    <Ring $x={169} $y={119} $w={230} $h={25} />
    <Ring $x={393} $y={23} $w={63} $h={34} />
  </Dialog>
);

export default function App() {
  return (
    <Page>
      <GlobalStyle />
      <MenuBar>
        {menus.map((m) => (
          <MenuItem key={m}>{m}</MenuItem>
        ))}
      </MenuBar>
      <Ring $x={0} $y={1} $w={41} $h={18} />
      <StandardBar />
      <DrawingBar />
      <Workspace>
        <Side>
          <MarketWatch />
          <Navigator />
        </Side>
        <Desk>
          <Mdi>
            <ChartWindow><Plot viewBox="0 0 398 158" /></ChartWindow>
            <ChartWindow title="XAUUSD,M1"><ChartM1 /></ChartWindow>
            <ChartWindow title="XAUUSD,M3 (offline)"><ChartM3 /></ChartWindow>
            <ChartWindow title="XAUUSD,M4 (offline)"><ChartM4 /></ChartWindow>
          </Mdi>
          <Footer>
            <ChartTab $on>XAUUSD,M1</ChartTab>
            <ChartTab>XAUUSD,M3 (offline)</ChartTab>
            <ChartTab>XAUUSD,M1</ChartTab>
            <ChartTab>XAUUSD,M4 (offline)</ChartTab>
          </Footer>
        </Desk>
      </Workspace>
      <StatusLine />
      <SiteLink href="#">www.125808047.com</SiteLink>
      <OfflineDialog />
    </Page>
  );
}
